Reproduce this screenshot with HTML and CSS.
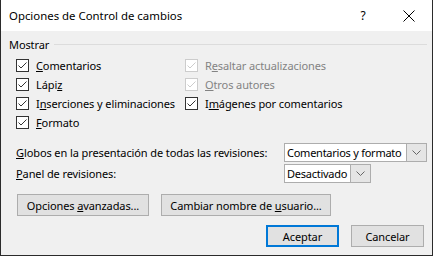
FILE: index.html
```html
<!DOCTYPE html>
<html lang="es">
<head>
    <meta charset="UTF-8">
    <title>Opciones de Control de cambios</title>
    <link rel="stylesheet" href="styles.css">
</head>
<body>
    <div class="ventana">
        <div class="titulo">
            <span class="titulo-texto">Opciones de Control de cambios</span>
            <span class="titulo-btn">?</span>
            <span class="titulo-btn">
                <svg width="12" height="12" viewBox="0 0 12 12"><path d="M0.5 0.5 L11.5 11.5 M11.5 0.5 L0.5 11.5" stroke="#000" stroke-width="1"/></svg>
            </span>
        </div>

        <div class="contenido">
            <div class="grupo">
                <span>Mostrar</span>
                <div class="grupo-linea"></div>
            </div>

            <div class="opciones">
                <label class="opcion">
                    <svg class="caja" width="13" height="13" viewBox="0 0 13 13"><rect x="0.5" y="0.5" width="12" height="12" fill="#fff" stroke="#333"/><path d="M2.5 6.5 L5 9 L10.5 3.5" fill="none" stroke="#333"/></svg>
                    <span><u>C</u>omentarios</span>
                </label>
                <label class="opcion desactivada">
                    <svg class="caja" width="13" height="13" viewBox="0 0 13 13"><rect x="0.5" y="0.5" width="12" height="12" fill="#fff" stroke="#ccc"/><path d="M2.5 6.5 L5 9 L10.5 3.5" fill="none" stroke="#ccc"/></svg>
                    <span>R<u>e</u>saltar actualizaciones</span>
                </label>
                <label class="opcion">
                    <svg class="caja" width="13" height="13" viewBox="0 0 13 13"><rect x="0.5" y="0.5" width="12" height="12" fill="#fff" stroke="#333"/><path d="M2.5 6.5 L5 9 L10.5 3.5" fill="none" stroke="#333"/></svg>
                    <span>Lápi<u>z</u></span>
                </label>
                <label class="opcion desactivada">
                    <svg class="caja" width="13" height="13" viewBox="0 0 13 13"><rect x="0.5" y="0.5" width="12" height="12" fill="#fff" stroke="#ccc"/><path d="M2.5 6.5 L5 9 L10.5 3.5" fill="none" stroke="#ccc"/></svg>
                    <span><u>O</u>tros autores</span>
                </label>
                <label class="opcion">
                    <svg class="caja" width="13" height="13" viewBox="0 0 13 13"><rect x="0.5" y="0.5" width="12" height="12" fill="#fff" stroke="#333"/><path d="M2.5 6.5 L5 9 L10.5 3.5" fill="none" stroke="#333"/></svg>
                    <span>I<u>n</u>serciones y eliminaciones</span>
                </label>
                <label class="opcion">
                    <svg class="caja" width="13" height="13" viewBox="0 0 13 13"><rect x="0.5" y="0.5" width="12" height="12" fill="#fff" stroke="#333"/><path d="M2.5 6.5 L5 9 L10.5 3.5" fill="none" stroke="#333"/></svg>
                    <span>I<u>m</u>ágenes por comentarios</span>
                </label>
                <label class="opcion">
                    <svg class="caja" width="13" height="13" viewBox="0 0 13 13"><rect x="0.5" y="0.5" width="12" height="12" fill="#fff" stroke="#333"/><path d="M2.5 6.5 L5 9 L10.5 3.5" fill="none" stroke="#333"/></svg>
                    <span><u>F</u>ormato</span>
                </label>
            </div>

            <div class="ajustes">
                <span><u>G</u>lobos en la presentación de todas las revisiones:</span>
                <div class="desplegable ancho">
                    <span class="desplegable-valor">Comentarios y formato</span>
                    <span class="desplegable-flecha">
                        <svg width="9" height="5" viewBox="0 0 9 5"><path d="M0.5 0.5 L4.5 4.5 L8.5 0.5" fill="none" stroke="#666"/></svg>
                    </span>
                </div>
                <span><u>P</u>anel de revisiones:</span>
                <div class="desplegable corto">
                    <span class="desplegable-valor">Desactivado</span>
                    <span class="desplegable-flecha">
                        <svg width="9" height="5" viewBox="0 0 9 5"><path d="M0.5 0.5 L4.5 4.5 L8.5 0.5" fill="none" stroke="#666"/></svg>
                    </span>
                </div>
            </div>

            <div class="botones-extra">
                <button class="btn btn-avanzadas">Opciones <u>a</u>vanzadas...</button>
                <button class="btn btn-usuario">Cambiar nombre de <u>u</u>suario...</button>
            </div>

            <div class="botones-final">
                <button class="btn btn-dialogo principal">Aceptar</button>
                <button class="btn btn-dialogo">Cancelar</button>
            </div>
        </div>
    </div>
</body>
</html>
```

FILE: styles.css
```css
* {
    margin: 0;
    padding: 0;
    box-sizing: border-box;
}

body {
    font-family: 'Noto Sans', 'Open Sans', sans-serif;
    font-size: 11px;
    letter-spacing: -0.1px;
    color: #000;
    background: #fff;
    white-space: nowrap;
}

.ventana {
    width: 433px;
    height: 256px;
    border: 1px solid #2b2b2b;
    border-top: none;
    background: #f0f0f0;
    display: flex;
    flex-direction: column;
}

.titulo {
    height: 31px;
    background: #fff;
    display: flex;
    align-items: center;
}

.titulo-texto {
    flex: 1;
    padding-left: 8px;
    font-size: 11.4px;
    letter-spacing: 0;
}

.titulo-btn {
    width: 46px;
    height: 31px;
    display: flex;
    align-items: center;
    justify-content: center;
    font-size: 12px;
}

.contenido {
    padding: 5px 8px 0 8px;
}

.grupo {
    height: 16px;
    display: flex;
    align-items: center;
    gap: 5px;
}

.grupo-linea {
    flex: 1;
    height: 1px;
    background: #dcdcdc;
    margin-right: -3px;
}

.opciones {
    margin-top: 4px;
    padding-left: 7px;
    display: grid;
    grid-template-columns: 169px 1fr;
    grid-auto-rows: 19px;
}

.opcion {
    display: flex;
    align-items: center;
    gap: 7px;
}

.caja {
    flex: none;
}

.desactivada {
    color: #838383;
}

.ajustes {
    margin-top: 11px;
    padding-left: 7px;
    display: grid;
    grid-template-columns: 268px auto;
    grid-auto-rows: 19px;
    row-gap: 2px;
    align-items: center;
    justify-items: start;
}

.desplegable {
    height: 19px;
    display: flex;
    border: 1px solid #adadad;
    background: #fff;
}

.ancho {
    width: 143px;
}

.corto {
    width: 87px;
}

.desplegable-valor {
    flex: 1;
    padding-left: 2px;
    line-height: 17px;
    letter-spacing: -0.25px;
    overflow: hidden;
}

.desplegable-flecha {
    width: 20px;
    background: #e5e5e5;
    border-left: 1px solid #adadad;
    display: flex;
    align-items: center;
    justify-content: center;
}

.btn {
    font-family: inherit;
    font-size: 11px;
    letter-spacing: -0.1px;
    color: #000;
    height: 22px;
    background: #e1e1e1;
    border: 1px solid #adadad;
}

.botones-extra {
    margin-top: 11px;
    padding-left: 8px;
    display: flex;
    gap: 12px;
}

.btn-avanzadas {
    width: 132px;
}

.btn-usuario {
    width: 170px;
}

.botones-final {
    margin-top: 9px;
    display: flex;
    justify-content: flex-end;
    gap: 12px;
}

.btn-dialogo {
    width: 73px;
}

.principal {
    border: 2px solid #0078d7;
}
```
